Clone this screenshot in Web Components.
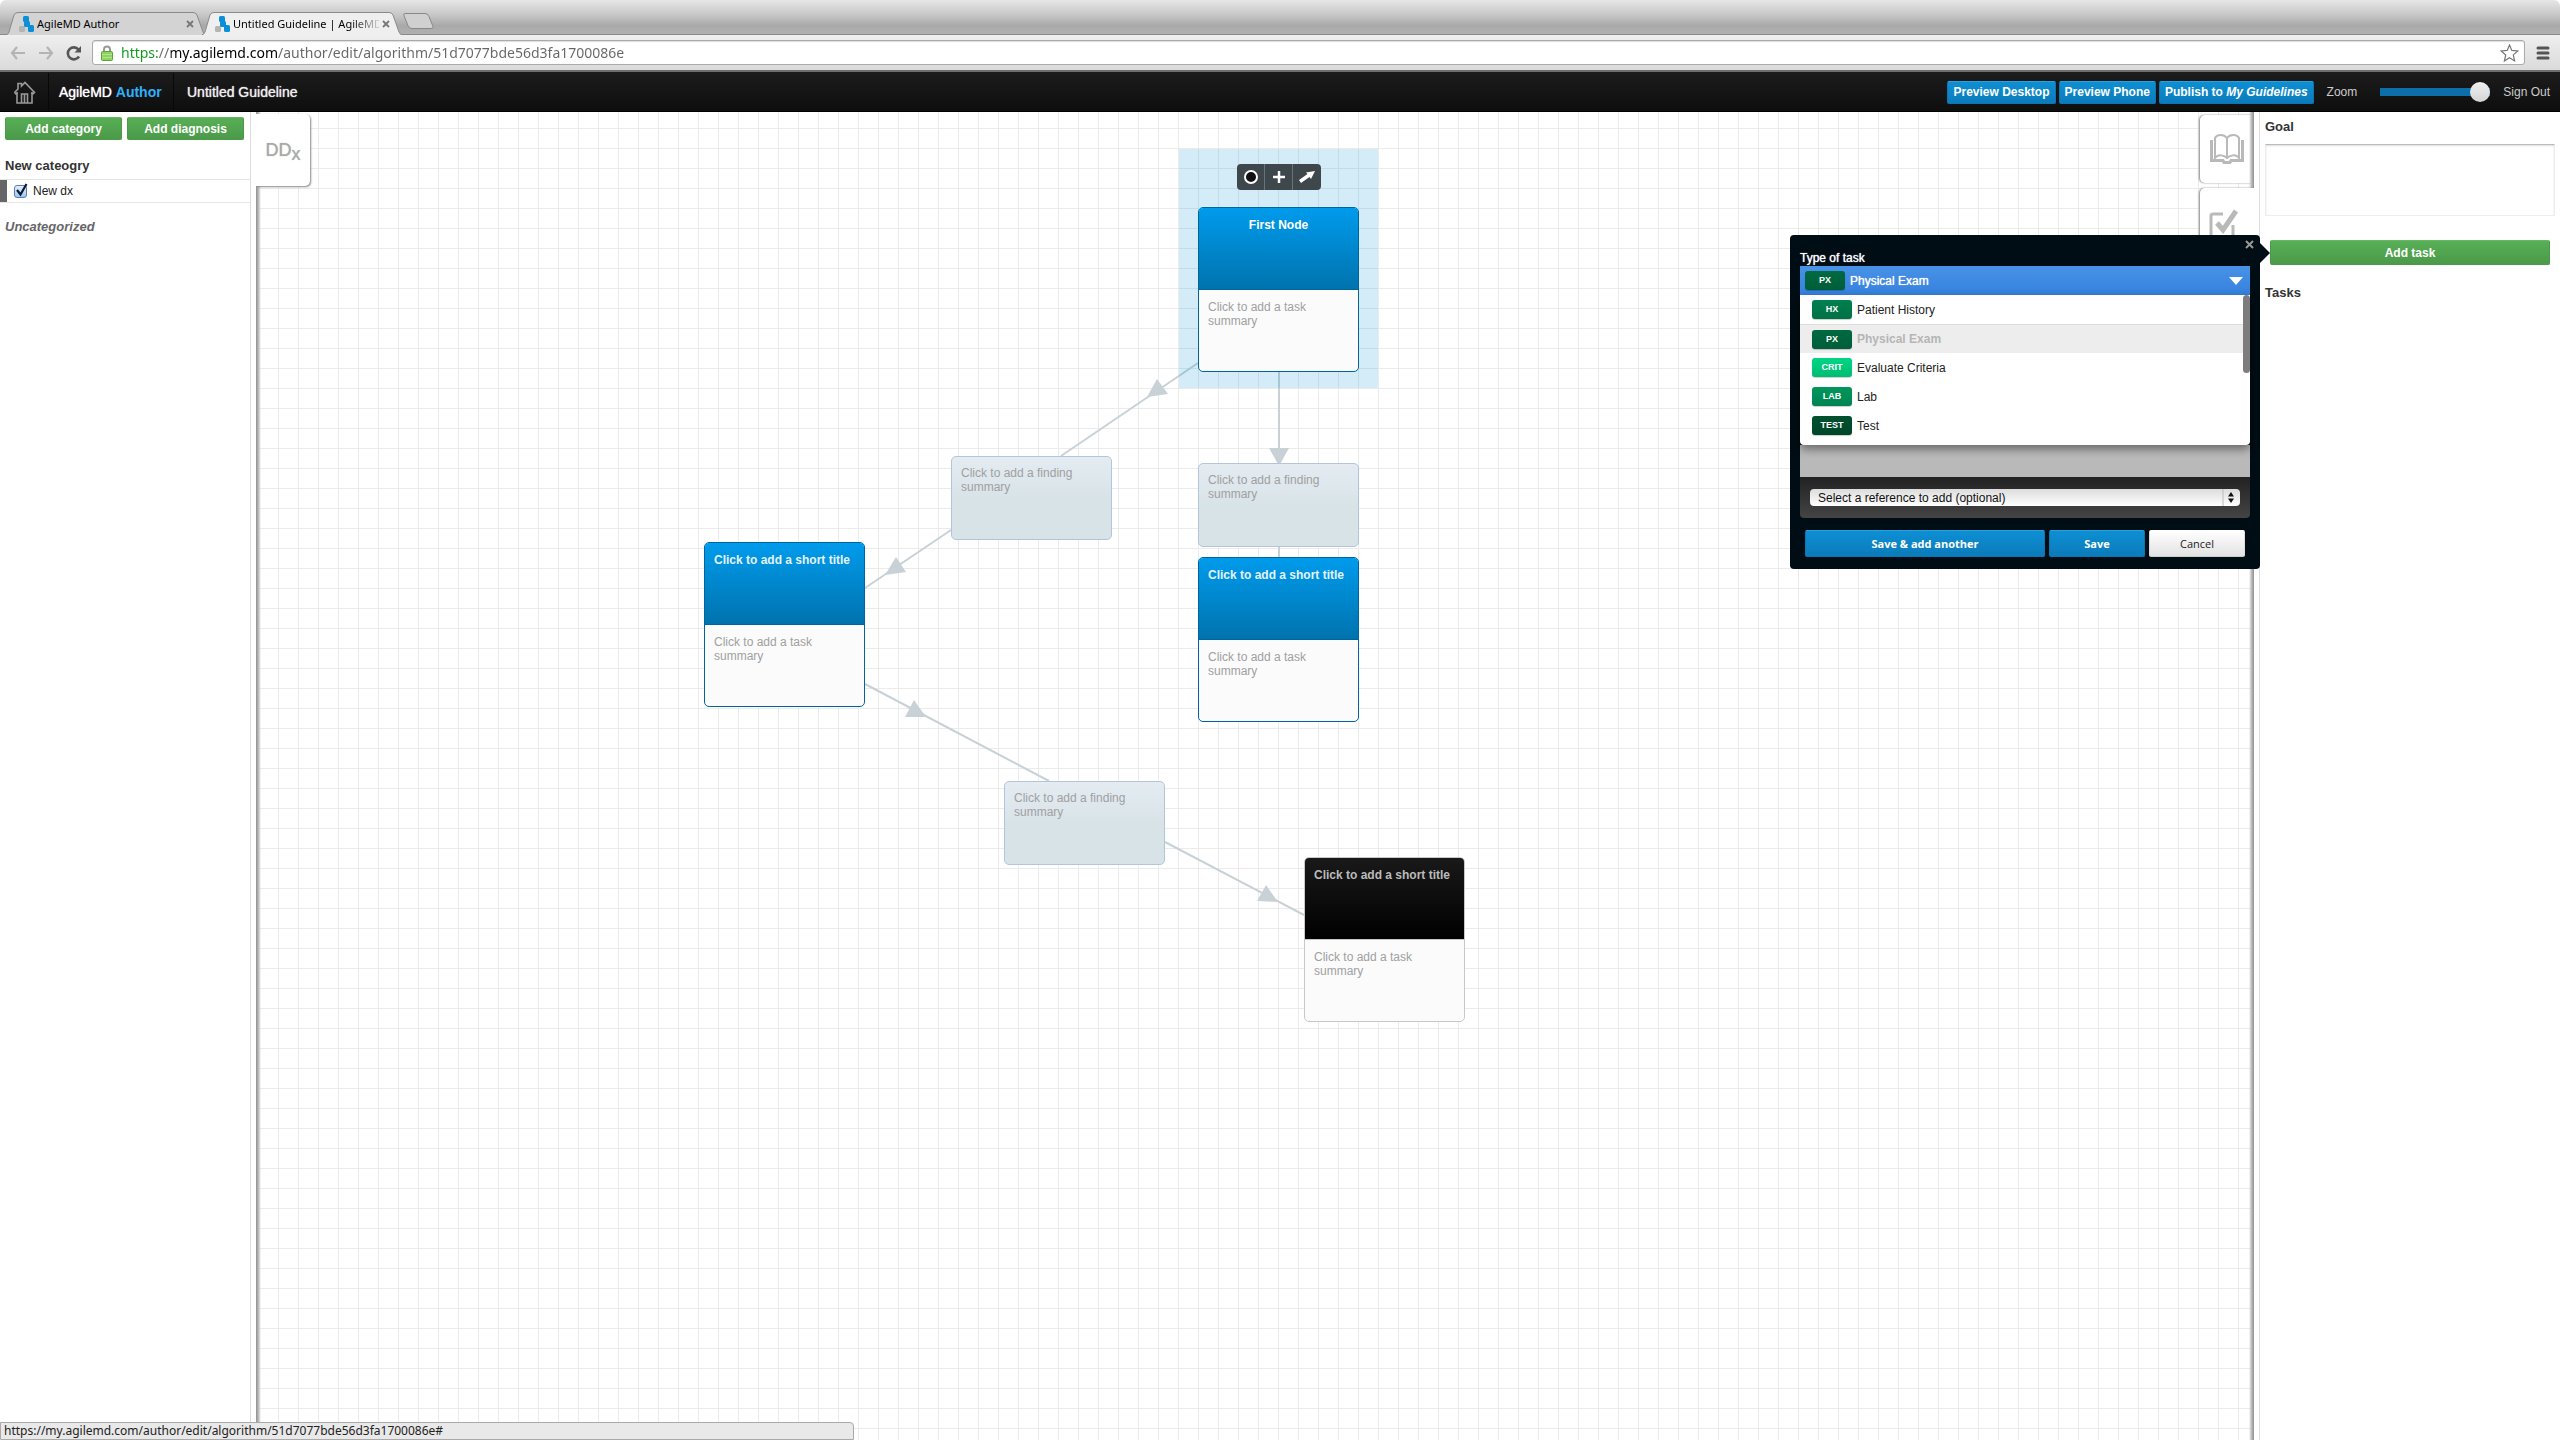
<!DOCTYPE html>
<html lang="en">
<head>
<meta charset="utf-8">
<title>Untitled Guideline | AgileMD</title>
<style>
html, body { height: 100%; }
body { margin: 0; overflow: hidden; background: #fff; color: #333; font: 12px/14px "Liberation Sans", Arial, sans-serif; }
</style>
</head>
<body>
<author-app></author-app>

<template id="author-app">
<style>
:host { display: flex; flex-direction: column; height: 100vh; position: relative; }
main { flex: 1; min-height: 0; display: grid; grid-template-columns: 256px minmax(0, 1fr) 306px; }
status-bubble { position: absolute; left: 0; bottom: 0; z-index: 9; }
</style>
<browser-chrome></browser-chrome>
<app-header></app-header>
<main>
  <diagnosis-panel></diagnosis-panel>
  <flow-canvas></flow-canvas>
  <task-panel></task-panel>
</main>
<status-bubble>https://my.agilemd.com/author/edit/algorithm/51d7077bde56d3fa1700086e#</status-bubble>
</template>

<template id="browser-chrome">
<style>
:host { display: block; flex: none; font-family: "Noto Sans", sans-serif; }
.strip { height: 35px; box-sizing: border-box; padding: 12px 0 0 6px; display: flex; background: linear-gradient(#e6e6e6, #c6c6c6 45%, #a9a9a9 75%, #b0b0b0); border-bottom: 1px solid #8a8a8a; border-radius: 6px 6px 0 0; }
browser-tab { width: 200px; }
browser-tab[active] { margin-left: -4px; position: relative; z-index: 1; }
.new { border: 0; background: none; padding: 0; height: 22px; margin-left: -1px; }
.bar { height: 37px; box-sizing: border-box; padding: 0 10px; display: flex; align-items: center; gap: 14px; background: linear-gradient(#efefef, #dadada); border-bottom: 2px solid #6b706f; }
.bar button { border: 0; background: none; padding: 0; display: flex; }
.nav { display: flex; gap: 12px; }
.box { flex: 1; display: flex; align-items: center; gap: 8px; height: 25px; box-sizing: border-box; border: 1px solid #aaa; border-radius: 3px; background: #fff; padding: 0 5px 0 8px; margin-left: -4px; margin-right: -3px; box-shadow: inset 0 1px 1px #ddd; }
input { flex: 1; min-width: 0; border: 0; outline: 0; padding: 0; height: 20px; font: 14px/20px "Noto Sans", sans-serif; background: linear-gradient(90deg, #0a9a1a 36px, #666 36px, #666 50px, #000 50px, #000 157px, #666 157px); -webkit-background-clip: text; background-clip: text; -webkit-text-fill-color: transparent; }
</style>
<div class="strip">
  <browser-tab>AgileMD Author</browser-tab>
  <browser-tab active>Untitled Guideline | AgileMD</browser-tab>
  <button class="new" aria-label="New tab"><svg width="33" height="17" viewBox="0 0 33 17"><path d="M4 .5h20q3 0 4 3l4 10q1 2-2 2H11q-3 0-4-3L3 3q-1-2.500 1-2.500z" fill="#d0d0d0" stroke="#888"/></svg></button>
</div>
<div class="bar">
  <div class="nav">
    <button aria-label="Back"><svg width="16" height="16" viewBox="0 0 16 16" fill="none" stroke="#b4b4b4" stroke-width="2.200"><path d="M15 8H2M7 2L2 8l5 6"/></svg></button>
    <button aria-label="Forward"><svg width="16" height="16" viewBox="0 0 16 16" fill="none" stroke="#b4b4b4" stroke-width="2.200"><path d="M1 8h13M9 2l5 6-5 6"/></svg></button>
    <button aria-label="Reload"><svg width="16" height="16" viewBox="0 0 16 16"><path d="M13 11.500a6 6 0 1 1-.5-7" fill="none" stroke="#555" stroke-width="2.600"/><path d="M15 1v6.500H8.500z" fill="#555"/></svg></button>
  </div>
  <div class="box">
    <svg width="12" height="16" viewBox="0 0 12 16"><path d="M3 8V4.500a3 3 0 0 1 6 0V8" fill="none" stroke="#999" stroke-width="2"/><rect x=".5" y="6.500" width="11" height="9" rx="1" fill="#8fd25f" stroke="#5aa63a"/><path d="M1 9.500h10M1 12.500h10" stroke="#b3e68c"/></svg>
    <input aria-label="Address" value="https://my.agilemd.com/author/edit/algorithm/51d7077bde56d3fa1700086e">
    <svg width="19" height="18" viewBox="0 0 19 18"><path d="M9.500 1l2.300 5.400 6 .5-4.500 4 1.300 6L9.500 13.800 4.400 17l1.300-6-4.500-4 6-.6z" fill="#fff" stroke="#777" stroke-width="1.200"/></svg>
  </div>
  <button aria-label="Menu"><svg width="14" height="14" viewBox="0 0 14 14" stroke="#555" stroke-width="3" stroke-linecap="round"><path d="M2 2h10M2 7h10M2 12h10"/></svg></button>
</div>
</template>

<template id="browser-tab">
<style>
:host { display: block; position: relative; height: 23px; color: #000; font-size: 11px; line-height: 23px; }
.shape { position: absolute; left: 0; top: 0; width: 100%; height: 100%; }
.shape path { fill: #d3d3d3; stroke: #8a8a8a; }
:host([active]) .shape path { fill: #efefef; }
.row { position: relative; display: flex; align-items: center; gap: 3px; padding: 0 12px 0 13px; }
.text { flex: 1; min-width: 0; overflow: hidden; white-space: nowrap; }
:host([active]) .text { -webkit-mask-image: linear-gradient(90deg, #000 118px, transparent 150px); mask-image: linear-gradient(90deg, #000 118px, transparent 150px); }
button { border: 0; padding: 0; background: none; display: flex; }
</style>
<svg class="shape" viewBox="0 0 200 23" preserveAspectRatio="none"><path d="M-1 23Q2 23 3 20L8 3Q9 .5 12 .5H187Q190 .5 191 3L197 20Q198 23 201 23"/></svg>
<div class="row">
  <svg width="15" height="16" viewBox="0 0 15 16"><rect x="0" y="10" width="6" height="6" rx="1.500" fill="#b4b4b4"/><rect x="4" y="0" width="6" height="6" rx="1.500" fill="#0a8fd8"/><rect x="5" y="5" width="6" height="6" rx="1.500" fill="#0a8fd8"/><rect x="9" y="9" width="6" height="7" rx="1.500" fill="#0a8fd8"/></svg>
  <span class="text"><slot></slot></span>
  <button aria-label="Close tab"><svg width="8" height="8" viewBox="0 0 8 8" stroke="#777" stroke-width="1.800"><path d="M1 1l6 6M7 1L1 7"/></svg></button>
</div>
</template>

<template id="status-bubble">
<style>
:host { display: block; box-sizing: border-box; width: 854px; max-width: 100%; height: 18px; padding: 0 3px; border: 1px solid #aaa; border-radius: 0 4px 0 0; background: #e9e9e9; color: #222; font: 12px/16px "Noto Sans", sans-serif; }
</style>
<slot></slot>
</template>

<template id="blue-button">
<style>
:host { display: inline-flex; }
button { flex: 1; border: 1px solid #0b76b4; border-top-color: #29a0e0; border-radius: 2px; background: linear-gradient(#0e8fd3, #0b7bbb); color: #fff; height: 23px; padding: 0 5px; font: inherit; font-weight: bold; line-height: 20px; white-space: nowrap; }
:host([kind=green]) button { border-color: #4a9a48; border-top-color: #63b861; background: linear-gradient(#58af56, #4b9a4a); }
:host([tall]) button { height: 25px; }
:host([kind=save]) button, :host([kind=plain]) button { height: 27px; font: bold 11px/24px "Open Sans", sans-serif; }
:host([kind=plain]) button { font-weight: normal; color: #222; border-color: #fff #ddd #ccc; background: linear-gradient(#fff, #e2e2e2); }
</style>
<button><slot></slot></button>
</template>

<template id="app-header">
<style>
:host { flex: none; box-sizing: border-box; height: 40px; display: flex; align-items: center; justify-content: space-between; background: linear-gradient(#1c1c1c, #0e0e0e); border-bottom: 1px solid #000; padding-top: 1px; color: #eee; }
.left, .right { display: flex; align-items: center; height: 100%; }
.left > * { box-sizing: border-box; height: 100%; display: flex; align-items: center; font-size: 14px; text-shadow: 0 0 1px currentColor; white-space: pre; }
.home { width: 49px; padding-left: 13px; border-right: 1px solid #080808; }
.brand { width: 125px; padding-left: 10px; border-right: 1px solid #080808; color: #fff; text-decoration: none; }
.brand b { color: #2fb0fb; text-shadow: none; }
h1 { margin: 0; padding-left: 13px; font-weight: normal; }
.right { gap: 3px; padding-right: 10px; }
label { margin: 0 20px 0 10px; color: #ccc; }
a { color: #ccc; text-decoration: none; }
input { appearance: none; -webkit-appearance: none; margin: 0 10px 0 0; width: 110px; height: 20px; background: linear-gradient(#0c6faa, #0c6faa) center / 100% 8px no-repeat; border-radius: 4px; }
input::-webkit-slider-thumb { -webkit-appearance: none; width: 20px; height: 20px; border-radius: 50%; background: linear-gradient(#f0f0f0, #d4d4d4); }
</style>
<div class="left">
  <a class="home" href="#" aria-label="Home"><svg width="23" height="23" viewBox="0 0 23 23" fill="none" stroke="#999" stroke-width="1.600"><path d="M4 11v11h15V11M1.500 11.500L5 8V2.500h3.500V5L12 1.500l9.500 10-1.500 1.300-2-1M1.500 11.500l1.300 1.300 2-1M8.500 22v-9h6v9M11.500 13v9"/></svg></a>
  <a class="brand" href="#">AgileMD <b>Author</b></a>
  <h1>Untitled Guideline</h1>
</div>
<div class="right">
  <blue-button>Preview Desktop</blue-button>
  <blue-button>Preview Phone</blue-button>
  <blue-button>Publish to <i>My Guidelines</i></blue-button>
  <label for="zoom">Zoom</label>
  <input id="zoom" type="range" min="0" max="100" value="100">
  <a href="#">Sign Out</a>
</div>
</template>

<template id="diagnosis-panel">
<style>
:host { display: block; background: #fff; }
.inner { box-sizing: border-box; height: 100%; width: 251px; border-right: 1px solid #ddd; padding-top: 5px; }
.buttons { display: grid; grid-template-columns: 1fr 1fr; gap: 5px; padding: 0 6px 0 5px; }
h2 { margin: 0; padding: 0 5px; font-size: 13px; line-height: 16px; }
.cat { margin-top: 18px; }
.row { display: flex; align-items: center; gap: 6px; height: 24px; margin: 5px 0 16px; box-sizing: border-box; border: solid #e4e4e4; border-width: 1px 0; box-shadow: inset 7px 0 #666; padding-left: 14px; color: #222; }
.un { color: #666; font-style: italic; }
input { appearance: none; -webkit-appearance: none; margin: 0; width: 13px; height: 13px; border: 1px solid #5a7db4; border-radius: 3px; background: linear-gradient(#e4f0fc, #9cc6f2); }
.tick { position: relative; display: flex; }
.tick svg { position: absolute; left: 1px; bottom: 1px; pointer-events: none; }
</style>
<div class="inner">
  <div class="buttons"><blue-button kind="green">Add category</blue-button><blue-button kind="green">Add diagnosis</blue-button></div>
  <h2 class="cat">New cateogry</h2>
  <div class="row"><span class="tick"><input type="checkbox" id="dx" checked><svg width="13" height="14" viewBox="0 0 13 14"><path d="M2 7l3.500 4.500L11.500 1" fill="none" stroke="#0c1c30" stroke-width="2.200"/></svg></span><label for="dx">New dx</label></div>
  <h2 class="un">Uncategorized</h2>
</div>
</template>

<template id="flow-canvas">
<style>
:host { display: block; position: relative; overflow: hidden; background: linear-gradient(90deg, #ebebeb 1px, transparent 1px) 2px 0 / 20px 20px, linear-gradient(#ebebeb 1px, transparent 1px) 0 16px / 20px 20px, #fff; }
.edges { position: absolute; left: 0; top: 0; }
.halo { position: absolute; left: 923px; top: 37px; width: 199px; height: 239px; background: rgba(0, 140, 210, .17); }
flow-node { position: absolute; left: var(--x); top: var(--y); }
.tools { position: absolute; left: 981px; top: 52px; display: flex; border-radius: 4px; overflow: hidden; background: #3e474b; }
.tools button { width: 28px; height: 26px; padding: 0; border: 0; border-right: 1px solid #687479; background: none; display: flex; align-items: center; justify-content: center; }
.tools button:last-child { border: 0; }
.shade { position: absolute; top: 0; bottom: 0; width: 5px; }
.l { left: 0; background: linear-gradient(90deg, #8f8f8f, #bbb 50%, rgba(255,255,255,0)); }
.r { right: 0; background: linear-gradient(270deg, #8f8f8f, #bbb 50%, rgba(255,255,255,0)); }
.tab { position: absolute; box-sizing: border-box; width: 54px; background: #fff; border: 0; padding: 0; color: #aaa; display: flex; align-items: center; justify-content: center; }
.ddx { left: 0; top: 2px; height: 72px; border-radius: 0 5px 5px 0; box-shadow: 1px 1px 2px #888; font: 18px/20px "Liberation Sans", Arial, sans-serif; text-shadow: 0 0 1px #aaa; }
.ddx sub { font-size: 18px; line-height: 0; vertical-align: -4px; }
.book { right: 0; top: 3px; height: 68px; border-radius: 5px 0 0 5px; box-shadow: -1px 0 2px #888; padding-right: 1px; }
.check { right: 0; top: 76px; height: 72px; border-radius: 5px 0 0 5px; box-shadow: -1px 0 2px #888; padding-right: 4px; }
</style>
<svg class="edges" width="1400" height="1000" viewBox="256 112 1400 1000" stroke="#c8d1d6" stroke-width="2" fill="none">
  <path d="M1198 363L1061 456M951 530L865 588M1279 372V463M1279 547V557M865 684L1049 781M1165 842L1304 915"/>
  <path stroke="none" fill="#c8d1d6" d="M1147 397l10-18 11 15zM885 575l11-18 10 15zM1269 448h20l-10 18zM905 717l9-17 12 17zM1257 901l9-16 12 17z"/>
</svg>
<div class="halo"></div>
<div class="tools">
  <button aria-label="Toggle terminal"><svg width="16" height="16" viewBox="0 0 16 16"><circle cx="8" cy="8" r="6" fill="#111" stroke="#fff" stroke-width="2"/></svg></button>
  <button aria-label="Add node"><svg width="12" height="12" viewBox="0 0 12 12" stroke="#fff" stroke-width="2.500"><path d="M6 0v12M0 6h12"/></svg></button>
  <button aria-label="Connect"><svg width="18" height="14" viewBox="0 0 18 14"><path d="M1 10l8.500-6L8 2.500 17 1l-4 8-1.500-2L3 13z" fill="#fff"/></svg></button>
</div>
<flow-node centered style="--x:942px;--y:95px"><span slot="title">First Node</span>Click to add a task summary</flow-node>
<flow-node kind="finding" style="--x:695px;--y:344px">Click to add a finding summary</flow-node>
<flow-node kind="finding" style="--x:942px;--y:351px">Click to add a finding summary</flow-node>
<flow-node style="--x:448px;--y:430px"><span slot="title">Click to add a short title</span>Click to add a task summary</flow-node>
<flow-node style="--x:942px;--y:445px"><span slot="title">Click to add a short title</span>Click to add a task summary</flow-node>
<flow-node kind="finding" style="--x:748px;--y:669px">Click to add a finding summary</flow-node>
<flow-node kind="end" style="--x:1048px;--y:745px"><span slot="title">Click to add a short title</span>Click to add a task summary</flow-node>
<button class="tab book" aria-label="References"><svg width="34" height="30" viewBox="0 0 34 30" fill="none" stroke="#b9b9b9"><path d="M17 4C14 0 7 0 5 4v20c3-4 9-3 12 0 3-3 9-4 12 0V4C27 0 20 0 17 4z" stroke-width="2"/><path d="M17 4v19" stroke-width="2"/><path d="M1.500 6v20.500H13l1 2h6l1-2h11.500V6" stroke-width="3"/></svg></button>
<div class="shade l"></div><div class="shade r"></div>
<button class="tab ddx"><span>DD<sub>x</sub></span></button>
<button class="tab check" aria-label="Tasks"><svg width="32" height="32" viewBox="0 0 32 32" fill="none" stroke="#b9b9b9"><path d="M14 6H4q-2 0-2 2v20q0 2 2 2h18q2 0 2-2V17" stroke-width="3"/><path d="M8 15l6 7L27 3" stroke-width="5"/></svg></button>
</template>

<template id="flow-node">
<style>
:host { box-sizing: border-box; width: 161px; height: 165px; display: flex; flex-direction: column; border: 1px solid #00659c; border-radius: 5px; overflow: hidden; background: #fbfbfb; color: #a0a0a0; font-size: 12px; line-height: 14px; }
h3 { margin: 0; box-sizing: border-box; height: 82px; padding: 10px 9px; font-size: 12px; line-height: 14px; color: #e3f3fd; white-space: nowrap; background: linear-gradient(#009bec, #0073ae); border-bottom: 1px solid #00659c; }
p { margin: 0; padding: 10px 9px; }
:host([centered]) h3 { text-align: center; color: #fff; }
:host([kind=finding]) { height: 84px; border-color: #b3c5dc; background: linear-gradient(#e4ecf2, #d8e3e8 50%); }
:host([kind=finding]) h3 { display: none; }
:host([kind=finding]) p { padding-top: 9px; }
:host([kind=end]) { border-color: #c8c8c8; }
:host([kind=end]) h3 { color: #bbb; background: linear-gradient(#191919, #000); border-color: #c8c8c8; }
</style>
<h3><slot name="title"></slot></h3>
<p><slot></slot></p>
</template>

<template id="task-panel">
<style>
:host { display: block; background: #fff; position: relative; }
.inner { box-sizing: border-box; height: 100%; margin-left: 5px; border-left: 1px solid #ddd; padding: 7px 5px 0; display: flex; flex-direction: column; }
label, h2 { margin: 0; font-size: 13px; font-weight: bold; line-height: 16px; }
textarea { box-sizing: border-box; width: 100%; height: 72px; margin: 9px 0 24px; resize: none; border: 1px solid #eee; border-top-color: #bbb; box-shadow: inset 0 1px 2px #ddd; }
.add { position: relative; padding: 0 5px; display: flex; margin-bottom: 20px; }
.add > blue-button { flex: 1; }
task-popover { position: absolute; right: 100%; top: -5px; margin-right: 5px; z-index: 5; }
</style>
<div class="inner">
  <label for="goal">Goal</label>
  <textarea id="goal"></textarea>
  <div class="add"><blue-button kind="green" tall>Add task</blue-button><task-popover></task-popover></div>
  <h2>Tasks</h2>
</div>
</template>

<template id="task-popover">
<style>
:host { box-sizing: border-box; display: flex; flex-direction: column; width: 470px; padding: 15px 10px 12px; border-radius: 4px; background: #000d14; color: #fff; }
:host::after { content: ""; position: absolute; left: 100%; top: 8px; border: solid transparent; border-width: 10px 0 10px 10px; border-left-color: #000d14; }
.close { position: absolute; right: 6px; top: 5px; border: 0; padding: 0; background: none; display: flex; }
.label { line-height: 16px; text-shadow: 0 0 1px #fff; }
.current { display: flex; align-items: center; gap: 5px; height: 29px; padding: 0 7px 0 5px; border: 0; background: linear-gradient(#4893e6, #3581de); color: #fff; font: inherit; text-shadow: 0 0 1px #fff; }
.current svg { margin-left: auto; }
ul { position: relative; margin: 0; padding: 0 0 5px; list-style: none; background: #fff; color: #222; border-radius: 0 0 4px 4px; box-shadow: 0 4px 10px rgba(0,0,0,.45); }
ul::after { content: ""; position: absolute; right: 0; top: 0; width: 7px; height: 78px; border-radius: 4px; background: #7d7d7d; }
li { box-sizing: border-box; display: flex; align-items: center; gap: 5px; height: 29px; padding-left: 12px; }
li[aria-selected] { background: #ededed; border-top: 1px solid #ddd; color: #b5b5b5; font-weight: bold; }
.note { height: 32px; background: #b9b9b9; }
.ref { position: relative; padding: 12px 10px; display: flex; background: linear-gradient(#222, #444); border-radius: 0 0 4px 4px; }
select { flex: 1; appearance: none; -webkit-appearance: none; height: 17px; padding: 0 8px; border: 0; border-radius: 4px; background: linear-gradient(#dcdcdc, #fff); color: #111; font: 12px/16px "Liberation Sans", Arial, sans-serif; }
.ref svg { position: absolute; right: 10px; top: 12px; pointer-events: none; }
.actions { display: grid; grid-template-columns: 5fr 2fr 2fr; gap: 4px; padding: 12px 5px 0; }
</style>
<button class="close" aria-label="Close"><svg width="9" height="9" viewBox="0 0 9 9" stroke="#999" stroke-width="2"><path d="M1 1l7 7M8 1L1 8"/></svg></button>
<span class="label" id="t">Type of task</span>
<button class="current" aria-haspopup="listbox" aria-labelledby="t"><task-badge style="--c:#006a41">PX</task-badge>Physical Exam<svg width="14" height="8" viewBox="0 0 14 8"><path d="M0 0h14L7 8z" fill="#fff"/></svg></button>
<ul role="listbox" aria-labelledby="t">
  <li role="option"><task-badge style="--c:#00804f">HX</task-badge>Patient History</li>
  <li role="option" aria-selected="true"><task-badge style="--c:#006a41">PX</task-badge>Physical Exam</li>
  <li role="option"><task-badge style="--c:#00d683">CRIT</task-badge>Evaluate Criteria</li>
  <li role="option"><task-badge style="--c:#00965c">LAB</task-badge>Lab</li>
  <li role="option"><task-badge style="--c:#00502f">TEST</task-badge>Test</li>
</ul>
<div class="note"></div>
<div class="ref"><select aria-label="Reference"><option>Select a reference to add (optional)</option></select><svg width="18" height="17" viewBox="0 0 18 17"><path d="M1 0v17" stroke="#bbb"/><path d="M6 7.500h6L9 3zM6 9.500h6L9 14z" fill="#111"/></svg></div>
<div class="actions"><blue-button kind="save">Save &amp; add another</blue-button><blue-button kind="save">Save</blue-button><blue-button kind="plain">Cancel</blue-button></div>
</template>

<template id="task-badge">
<style>
:host { display: block; width: 40px; height: 19px; border-radius: 3px; background: linear-gradient(transparent, rgba(0,0,0,.12)), var(--c); color: #fff; font: bold 9px/19px "Liberation Sans", Arial, sans-serif; text-align: center; text-shadow: none; box-shadow: 0 1px 1px rgba(0,0,0,.2); }
</style>
<slot></slot>
</template>

<script>
class TemplateElement extends HTMLElement {
  constructor() {
    super();
    const source = document.getElementById(this.localName);
    this.attachShadow({ mode: 'open' }).append(source.content.cloneNode(true));
  }
}
for (const name of ['blue-button', 'task-badge', 'browser-tab', 'flow-node', 'status-bubble', 'browser-chrome', 'app-header', 'diagnosis-panel', 'flow-canvas', 'task-popover', 'task-panel', 'author-app']) {
  customElements.define(name, class extends TemplateElement {});
}
</script>
</body>
</html>
